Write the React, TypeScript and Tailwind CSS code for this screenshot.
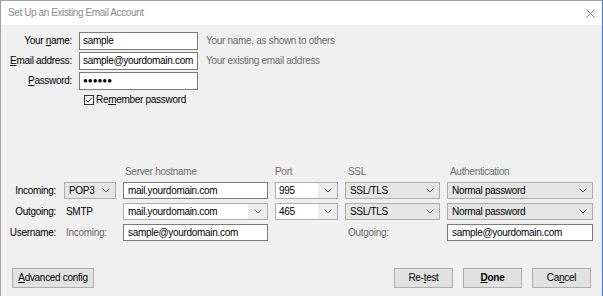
import React from "react";

const Chevron = () => (
  <svg width="8" height="5" viewBox="0 0 8 5" className="shrink-0">
    <path d="M0.5 0.5 L4 4 L7.5 0.5" fill="none" stroke="#6a6a6a" strokeWidth="1" />
  </svg>
);

const Select = ({ value }: { value: string }) => (
  <div className="h-[17px] border border-[#adadad] bg-[#e5e5e5] flex items-center justify-between pl-[4px] pr-[5px] text-black">
    <span>{value}</span>
    <Chevron />
  </div>
);

const Combo = ({ value }: { value: React.ReactNode }) => (
  <div className="h-[17px] border border-[#adadad] bg-white flex items-stretch text-black">
    <div className="flex-1 flex items-center pl-[3px]">{value}</div>
    <div className="w-[19px] bg-[#ececec] flex items-center justify-center">
      <Chevron />
    </div>
  </div>
);

const Field = ({ value, h = "h-[18px]" }: { value: React.ReactNode; h?: string }) => (
  <div className={`${h} border border-[#7a7a7a] bg-white flex items-center pl-[3px] text-black`}>{value}</div>
);

const Btn = ({ children, w, bold }: { children: React.ReactNode; w: string; bold?: boolean }) => (
  <div
    className={`${w} h-[20px] border border-[#adadad] bg-[#e1e1e1] flex items-center justify-center text-black ${bold ? "font-bold" : ""}`}
  >
    {children}
  </div>
);

export default function App() {
  return (
    <div className="w-[603px] h-[296px] overflow-hidden bg-[#f0f0f0] border-t border-l border-r border-t-[#a0a0a0] border-l-[#a0a0a0] border-r-[#3b78c9] flex flex-col font-['Liberation_Sans',Arial,sans-serif] text-[10px] leading-[12px] tracking-[-0.3px] text-black">
      {/* Title bar */}
      <div className="h-[24px] bg-white flex items-center justify-between pl-[7px] pr-[7px] shrink-0">
        <span className="text-[#8a8a8a] tracking-[-0.4px]">Set Up an Existing Email Account</span>
        <svg width="9" height="9" viewBox="0 0 9 9">
          <path d="M0.5 0.5 L8.5 8.5 M8.5 0.5 L0.5 8.5" stroke="#7a7a7a" strokeWidth="1" fill="none" />
        </svg>
      </div>

      {/* Body */}
      <div className="flex-1 flex flex-col pt-[7px]">
        <div className="grid grid-cols-[72px_119px_auto] gap-x-[6px] gap-y-[2px] items-center">
          <div className="text-right pr-[1px]">
            Your <span className="underline">n</span>ame:
          </div>
          <Field value="sample" />
          <div className="pl-[2px] text-[#6d6d6d]">Your name, as shown to others</div>

          <div className="text-right pr-[1px]">
            <span className="underline">E</span>mail address:
          </div>
          <Field value="sample@yourdomain.com" />
          <div className="pl-[2px] text-[#6d6d6d]">Your existing email address</div>

          <div className="text-right pr-[1px]">
            <span className="underline">P</span>assword:
          </div>
          <Field value={<span className="text-[8px] tracking-[0px]">●●●●●●</span>} />
          <div />
        </div>

        <div className="grid grid-cols-[72px_auto] gap-x-[6px] mt-[4px] h-[12px]">
          <div />
          <div className="flex items-center gap-[2px] pl-[5px]">
            <div className="w-[10px] h-[10px] border border-[#333] bg-white flex items-center justify-center">
              <svg width="8" height="8" viewBox="0 0 8 8">
                <path d="M1 4 L3 6.2 L7 1.5" fill="none" stroke="#222" strokeWidth="1" />
              </svg>
            </div>
            <span>
              Re<span className="underline">m</span>ember password
            </span>
          </div>
        </div>

        {/* Server settings */}
        <div className="mt-[60px] grid grid-cols-[56px_52px_145px_63px_95px_146px] gap-x-[7px] gap-y-[4px] items-center">
          <div className="h-[11px]" />
          <div />
          <div className="pl-[2px] text-[#6d6d6d]">Server hostname</div>
          <div className="text-[#6d6d6d]">Port</div>
          <div className="pl-[3px] text-[#6d6d6d]">SSL</div>
          <div className="pl-[3px] text-[#6d6d6d]">Authentication</div>

          <div className="text-right pr-[1px]">Incoming:</div>
          <Select value="POP3" />
          <Field value={<span className="pl-[1px]">mail.yourdomain.com</span>} h="h-[17px]" />
          <Combo value="995" />
          <Select value="SSL/TLS" />
          <Select value="Normal password" />

          <div className="text-right pr-[1px]">Outgoing:</div>
          <div className="pl-[2px]">SMTP</div>
          <Combo value={<span className="pl-[1px]">mail.yourdomain.com</span>} />
          <Combo value="465" />
          <Select value="SSL/TLS" />
          <Select value="Normal password" />

          <div className="text-right pr-[1px]">Username:</div>
          <div className="pl-[2px] text-[#6d6d6d]">Incoming:</div>
          <Field value={<span className="pl-[1px]">sample@yourdomain.com</span>} h="h-[17px]" />
          <div />
          <div className="pl-[3px] text-[#6d6d6d]">Outgoing:</div>
          <Field value={<span className="pl-[1px]">sample@yourdomain.com</span>} h="h-[17px]" />
        </div>

        {/* Buttons */}
        <div className="mt-[27px] flex items-center pl-[11px] pr-[11px]">
          <Btn w="w-[82px]">
            <span>
              <span className="underline">A</span>dvanced config
            </span>
          </Btn>
          <div className="flex-1" />
          <div className="flex gap-[10px]">
            <Btn w="w-[59px]">
              <span>
                Re-<span className="underline">t</span>est
              </span>
            </Btn>
            <Btn w="w-[59px]" bold>
              <span>
                <span className="underline">D</span>one
              </span>
            </Btn>
            <Btn w="w-[59px]">
              <span>
                Ca<span className="underline">n</span>cel
              </span>
            </Btn>
          </div>
        </div>
      </div>
    </div>
  );
}
